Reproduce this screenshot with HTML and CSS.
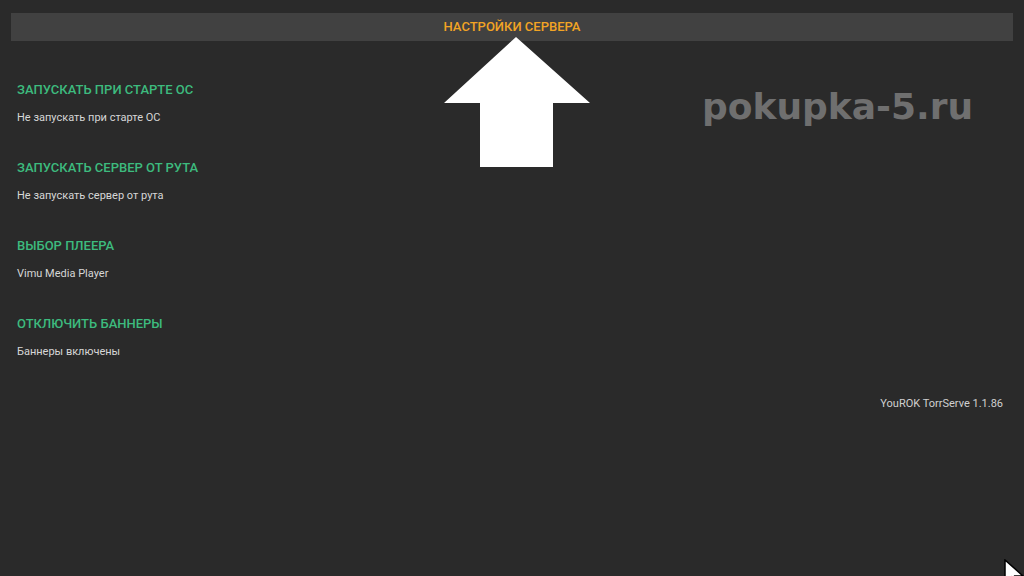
FILE: index.html
```html
<!DOCTYPE html>
<html lang="ru">

<head>
    <meta charset="UTF-8">
    <title>Настройки сервера</title>
    <link rel="stylesheet" href="styles.css">
</head>

<body>
    <div class="screen">
        <div class="header">НАСТРОЙКИ СЕРВЕРА</div>

        <div class="top">
            <div class="settings">
                <div class="item">
                    <div class="item-title">ЗАПУСКАТЬ ПРИ СТАРТЕ ОС</div>
                    <div class="item-value">Не запускать при старте ОС</div>
                </div>
                <div class="item">
                    <div class="item-title">ЗАПУСКАТЬ СЕРВЕР ОТ РУТА</div>
                    <div class="item-value">Не запускать сервер от рута</div>
                </div>
                <div class="item">
                    <div class="item-title">ВЫБОР ПЛЕЕРА</div>
                    <div class="item-value">Vimu Media Player</div>
                </div>
                <div class="item">
                    <div class="item-title">ОТКЛЮЧИТЬ БАННЕРЫ</div>
                    <div class="item-value">Баннеры включены</div>
                </div>
            </div>
        </div>

        <div class="version">YouROK TorrServe 1.1.86</div>

        <!-- overlays: arrow, watermark, mouse pointer -->
        <svg class="arrow" width="146" height="132" viewBox="0 0 146 132">
            <polygon points="72,0 146,66 109,66 109,130 36,130 36,66 0,66" fill="#fff"/>
        </svg>
        <div class="watermark">pokupka-5.ru</div>
        <svg class="cursor" width="20" height="26" viewBox="0 0 20 26">
            <polygon points="1,1 1,24 7,18 11,26 15,24 11,17 19,17" fill="#fff" stroke="#000" stroke-width="1.5"/>
        </svg>
    </div>
</body>

</html>
```

FILE: styles.css
```css
html, body {
    margin: 0;
    padding: 0;
    background: #2a2a2a;
}

.screen {
    position: relative;
    width: 1024px;
    height: 576px;
    overflow: hidden;
    font-family: Roboto, "Noto Sans", sans-serif;
}

.header {
    margin: 13px 11px 0 11px;
    height: 28px;
    line-height: 28px;
    background: #414141;
    color: #f2a424;
    font-size: 13px;
    font-weight: 500;
    text-align: center;
}

.settings {
    padding: 41px 0 0 17px;
}

.item {
    height: 78px;
}

.item-title {
    color: #3dbb7e;
    font-size: 13px;
    font-weight: 500;
    line-height: 16px;
}

.item-value {
    margin-top: 13px;
    color: #d6d6d6;
    font-size: 11px;
    line-height: 14px;
}

.version {
    margin: 3px 21px 0 0;
    text-align: right;
    color: #d0d0d0;
    font-size: 11px;
    line-height: 14px;
}

.arrow {
    position: absolute;
    left: 444px;
    top: 37px;
}

.watermark {
    position: absolute;
    left: 702px;
    top: 87px;
    color: #6f6f6f;
    font-family: "DejaVu Sans", Verdana, sans-serif;
    font-weight: bold;
    font-size: 36px;
    line-height: 40px;
}

.cursor {
    position: absolute;
    left: 1004px;
    top: 559px;
}
```
